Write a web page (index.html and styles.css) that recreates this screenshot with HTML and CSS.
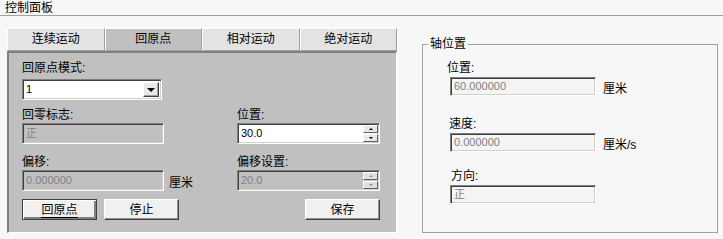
FILE: index.html
```html
<!doctype html>
<html lang="zh">
  <head>
    <meta charset="UTF-8" />
    <meta name="viewport" content="width=device-width, initial-scale=1.0" />
    <title>控制面板</title>
    <link rel="stylesheet" href="styles.css">
  </head>
  <body>
    <div class="title-bar"><span class="title">控制面板</span></div>

    <div class="main">
      <div class="motion">
        <div class="tabs">
          <div class="tab">连续运动</div>
          <div class="tab active">回原点</div>
          <div class="tab">相对运动</div>
          <div class="tab">绝对运动</div>
        </div>

        <div class="panel">
          <div class="label">回原点模式:</div>
          <div class="combo">
            <span class="value">1</span>
            <span class="drop"><i class="tri-down"></i></span>
          </div>

          <div class="row row-flag">
            <div class="col">
              <div class="label">回零标志:</div>
              <div class="edit disabled">正</div>
            </div>
            <div class="col">
              <div class="label">位置:</div>
              <div class="spin">
                <span class="value">30.0</span>
                <span class="spin-btns">
                  <span class="spin-btn"><i class="tri-up"></i></span>
                  <span class="spin-btn"><i class="tri-dn"></i></span>
                </span>
              </div>
            </div>
          </div>

          <div class="row row-offset">
            <div class="col">
              <div class="label">偏移:</div>
              <div class="with-unit">
                <div class="edit disabled">0.000000</div>
                <span class="unit">厘米</span>
              </div>
            </div>
            <div class="col">
              <div class="label">偏移设置:</div>
              <div class="spin disabled">
                <span class="value">20.0</span>
                <span class="spin-btns">
                  <span class="spin-btn"><i class="tri-up"></i></span>
                  <span class="spin-btn"><i class="tri-dn"></i></span>
                </span>
              </div>
            </div>
          </div>

          <div class="buttons">
            <button class="btn default"><span class="focus">回原点</span></button>
            <button class="btn">停止</button>
            <span class="spacer"></span>
            <button class="btn">保存</button>
          </div>
        </div>
      </div>

      <fieldset class="group">
        <legend>轴位置</legend>
        <div class="group-body">
          <div class="label g-pos">位置:</div>
          <div class="with-unit g-field">
            <div class="edit readonly">60.000000</div>
            <span class="unit">厘米</span>
          </div>

          <div class="label g-speed">速度:</div>
          <div class="with-unit g-field">
            <div class="edit readonly">0.000000</div>
            <span class="unit">厘米/s</span>
          </div>

          <div class="label g-dir">方向:</div>
          <div class="with-unit g-field">
            <div class="edit readonly">正</div>
          </div>
        </div>
      </fieldset>
    </div>
  </body>
</html>
```

FILE: styles.css
```css
body {
  margin: 0;
  width: 723px;
  height: 239px;
  overflow: hidden;
  background: #f7f7f7;
  color: #000;
  font-family: "Liberation Sans", "Noto Sans CJK SC", sans-serif;
  font-size: 12px;
}

.title-bar {
  height: 15px;
  padding-left: 5px;
  border-bottom: 1px solid #a0a0a0;
}

.title {
  display: block;
  line-height: 16px;
}

.main {
  display: flex;
  align-items: flex-start;
  padding: 12px 0 0 7px;
}

/* left: tabbed motion panel */
.motion {
  width: 390px;
}

.tabs {
  display: flex;
  height: 23px;
}

.tab {
  flex: 1;
  box-sizing: border-box;
  background: #e3e3e3;
  border-top: 1px solid #fff;
  border-left: 1px solid #fff;
  border-right: 1px solid #a0a0a0;
  border-bottom: 1px solid #a0a0a0;
  text-align: center;
  line-height: 21px;
}

.tab.active {
  background: #c0c0c0;
}

.panel {
  height: 182px;
  box-sizing: border-box;
  background: #c0c0c0;
  border-top: 2px solid #808080;
  border-left: 2px solid #808080;
  border-right: 1px solid #fff;
  border-bottom: 1px solid #fff;
  padding: 8px 0 0 13px;
}

.label {
  height: 14px;
  line-height: 14px;
  white-space: nowrap;
}

.row {
  display: flex;
}

.row .col:first-child {
  width: 215px;
}

.row-flag {
  margin-top: 8px;
}

.row-offset {
  margin-top: 11px;
}

.col .label {
  margin-bottom: 1px;
}

/* sunken boxes */
.combo,
.edit,
.spin {
  position: relative;
  box-sizing: border-box;
  height: 21px;
  border: 1px solid;
  border-color: #808080 #fff #fff #808080;
  box-shadow: inset 1px 1px 0 #404040, inset -1px -1px 0 #d4d0c8;
  background: #fff;
  padding-left: 3px;
  font-size: 11px;
  line-height: 19px;
  white-space: nowrap;
}

.combo {
  width: 140px;
  margin-top: 4px;
}

.edit {
  width: 142px;
}

.edit.disabled,
.spin.disabled {
  background: #c0c0c0;
  color: #808080;
}

.edit.readonly {
  width: 146px;
  height: 19px;
  line-height: 17px;
  background: #f4f4f4;
  color: #808080;
}

.spin {
  width: 143px;
}

.with-unit {
  display: flex;
  align-items: center;
}

.unit {
  margin-left: 5px;
  padding-top: 2px;
}

.drop {
  position: absolute;
  top: 2px;
  right: 2px;
  width: 16px;
  height: 15px;
  box-sizing: border-box;
  background: #e8e8e8;
  border: 1px solid;
  border-color: #fff #404040 #404040 #fff;
  box-shadow: inset -1px -1px 0 #a0a0a0;
  display: flex;
  align-items: center;
  justify-content: center;
}

.tri-down {
  width: 0;
  height: 0;
  border-left: 4px solid transparent;
  border-right: 4px solid transparent;
  border-top: 4px solid #000;
}

.spin-btns {
  position: absolute;
  top: 1px;
  right: 1px;
  width: 15px;
  display: flex;
  flex-direction: column;
  gap: 1px;
}

.spin-btn {
  height: 8px;
  box-sizing: border-box;
  background: #e8e8e8;
  border: 1px solid;
  border-color: #fff #606060 #606060 #fff;
  display: flex;
  align-items: center;
  justify-content: center;
}

.tri-up,
.tri-dn {
  width: 0;
  height: 0;
  border-left: 2px solid transparent;
  border-right: 2px solid transparent;
}

.tri-up {
  border-bottom: 2px solid #000;
}

.tri-dn {
  border-top: 2px solid #000;
}

.spin.disabled .spin-btn {
  background: #e0e0e0;
}

.spin.disabled .tri-up {
  border-bottom-color: #909090;
}

.spin.disabled .tri-dn {
  border-top-color: #909090;
}

.buttons {
  display: flex;
  width: 358px;
  margin-top: 8px;
  gap: 7px;
}

.spacer {
  flex: 1;
}

.btn {
  width: 75px;
  height: 21px;
  box-sizing: border-box;
  padding: 0;
  background: #f0f0f0;
  border: 1px solid;
  border-color: #fff #404040 #404040 #fff;
  box-shadow: inset -1px -1px 0 #909090;
  font: inherit;
  color: #000;
  line-height: 18px;
}

.btn.default {
  border: 1px solid #404040;
  box-shadow: inset 1px 1px 0 #fff, inset -2px -2px 0 #808080;
}

.focus {
  border-bottom: 1px solid #000;
}

/* right: axis position group */
.group {
  margin: 9px 0 0 25px;
  padding: 0 0 0 5px;
  width: 296px;
  height: 196px;
  box-sizing: border-box;
  border: 1px solid #a0a0a0;
}

.group legend {
  padding: 0 2px;
  line-height: 14px;
}

.group-body {
  padding-left: 19px;
}

.g-pos {
  margin-top: 10px;
}

.g-speed {
  margin-top: 21px;
  margin-left: 2px;
}

.g-dir {
  margin-top: 17px;
  margin-left: 4px;
}

.g-field {
  margin: 2px 0 0 3px;
}

.g-field .unit {
  margin-left: 7px;
}
```
